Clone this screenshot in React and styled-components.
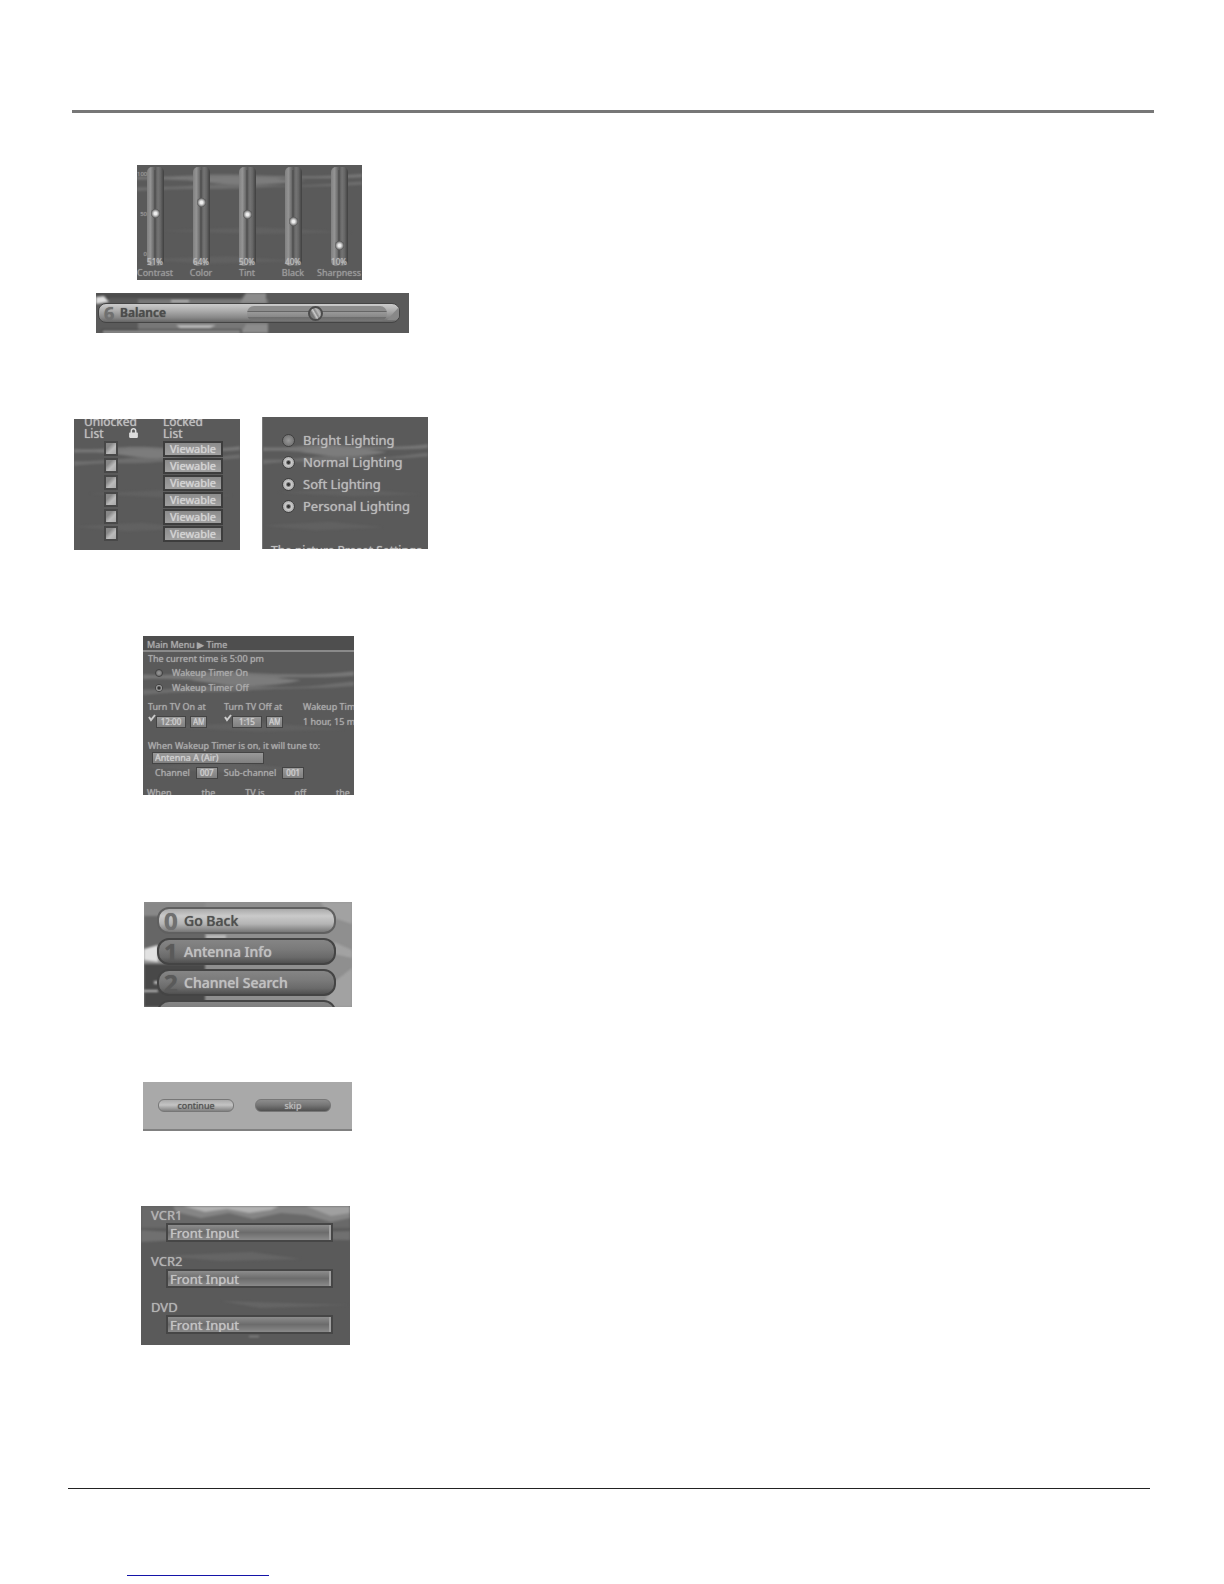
import React from 'react'
import styled, { createGlobalStyle, css } from 'styled-components'
import { FaLock } from 'react-icons/fa'

const levels = [
  { name: 'Contrast', value: 51 },
  { name: 'Color', value: 64 },
  { name: 'Tint', value: 50 },
  { name: 'Black', value: 40 },
  { name: 'Sharpness', value: 10 },
]
const channels = [1, 2, 3, 4, 5, 6]
const lighting = ['Bright Lighting', 'Normal Lighting', 'Soft Lighting', 'Personal Lighting']
const menu = ['Go Back', 'Antenna Info', 'Channel Search']
const devices = ['VCR1', 'VCR2', 'DVD']

const Waves = ({ top = 20 }) => (
  <Scenery viewBox="0 0 220 140" preserveAspectRatio="none" aria-hidden="true">
    <g transform={`translate(0 ${top})`}>
      <path d="M0 8 C40 10 60 4 100 6 S180 9 220 5 V9 C180 12 150 8 120 13 S50 10 0 12Z" fill="#777" />
      <path d="M0 21 C50 22 70 15 120 18 S190 16 220 14 V18 C180 21 150 19 110 22 S50 21 0 26Z" fill="#6e6e6e" />
      <path d="M50 13 C80 6 100 8 165 13 C140 18 110 19 85 17Z" fill="#7c7c7c" />
    </g>
    <path d="M20 80 L120 76 L210 82 L120 84Z M0 115 L90 111 L160 117 L70 120Z" fill="#616161" />
  </Scenery>
)

const Mark = () => (
  <MarkIcon viewBox="0 0 8 8" aria-hidden="true">
    <path d="M1 3 L3 6 L7 1" fill="none" stroke="#ccc" strokeWidth="2" />
  </MarkIcon>
)

const App = () => {
  return (
    <Page>
      <GlobalStyle />
      <TopRule />
      <Column>
        <LevelsShot>
          <Waves top={6} />
          <Scale>
            <span>100</span>
            <span>50</span>
            <span>0</span>
          </Scale>
          {levels.map((item) => (
            <Level key={item.name}>
              <Tube>
                <VerticalRange type="range" id={item.name} defaultValue={item.value} />
                <Percent>{item.value}%</Percent>
              </Tube>
              <LevelLabel htmlFor={item.name}>{item.name}</LevelLabel>
            </Level>
          ))}
        </LevelsShot>

        <BalanceShot>
          <Scenery viewBox="0 0 313 40" preserveAspectRatio="none" aria-hidden="true">
            <path d="M0 0H150L144 5H14L10 8L0 5Z" fill="#4c4c4c" />
            <path d="M42 6H172V40H42Z" fill="#777" />
            <path d="M150 0H170V10H144Z M150 31H172V40H145Z" fill="#8c8c8c" />
            <path d="M0 4 L8 3 L13 9 L0 11Z" fill="#ddd" />
            <path d="M75 7h18v2h-18z M80 32h40l-6 3h-30z" fill="#bbb" />
            <path d="M6 44V37H145V44Z" fill="#999" stroke="#333" />
          </Scenery>
          <BalanceBar>
            <Digit>6</Digit>
            <BalanceLabel htmlFor="balance">Balance</BalanceLabel>
            <BalanceRange type="range" id="balance" defaultValue={49} />
            <Tip viewBox="0 0 12 14" aria-hidden="true">
              <path d="M0 14 L12 1 V9 Q12 14 7 14Z" fill="#888" />
            </Tip>
          </BalanceBar>
        </BalanceShot>

        <Pair>
          <ListShot>
            <Waves top={24} />
            <ListTable>
              <thead>
                <tr>
                  <th>
                    Unlocked
                    <br />
                    List <LockIcon />
                  </th>
                  <th>
                    Locked
                    <br />
                    List
                  </th>
                </tr>
              </thead>
              <tbody>
                {channels.map((n) => (
                  <tr key={n}>
                    <td>
                      <Tick type="checkbox" aria-label={`Unlocked ${n}`} />
                    </td>
                    <td>
                      <Viewable type="button">Viewable</Viewable>
                    </td>
                  </tr>
                ))}
              </tbody>
            </ListTable>
          </ListShot>
          <LightingShot>
            <Waves top={24} />
            {lighting.map((item, i) => (
              <Choice key={item}>
                <Radio type="radio" name="lighting" defaultChecked={i === 0} />
                {item}
              </Choice>
            ))}
            <Hint>The picture Preset Settings</Hint>
          </LightingShot>
        </Pair>

        <TimerShot>
          <Waves top={26} />
          <Crumbs>Main Menu ▶ Time</Crumbs>
          <TimerBody>
            <p>The current time is 5:00 pm</p>
            <SmallChoice>
              <Radio $small type="radio" name="timer" defaultChecked />
              Wakeup Timer On
            </SmallChoice>
            <SmallChoice>
              <Radio $small type="radio" name="timer" />
              Wakeup Timer Off
            </SmallChoice>
            <Times>
              <div>
                <label htmlFor="on">Turn TV On at</label>
                <TimeRow>
                  <Mark />
                  <Field id="on" $w={30} defaultValue="12:00" />
                  <Field aria-label="On half" $w={17} defaultValue="AM" />
                </TimeRow>
              </div>
              <div>
                <label htmlFor="off">Turn TV Off at</label>
                <TimeRow>
                  <Mark />
                  <Field id="off" $w={30} defaultValue="1:15" />
                  <Field aria-label="Off half" $w={17} defaultValue="AM" />
                </TimeRow>
              </div>
              <div>
                <span>Wakeup Timer</span>
                <TimeRow>1 hour, 15 min</TimeRow>
              </div>
            </Times>
            <label htmlFor="tune">When Wakeup Timer is on, it will tune to:</label>
            <TuneSelect id="tune">
              <option>Antenna A (Air)</option>
            </TuneSelect>
            <TuneRow>
              <label htmlFor="channel">Channel</label>
              <Field id="channel" $w={22} defaultValue="007" />
              <label htmlFor="sub">Sub-channel</label>
              <Field id="sub" $w={22} defaultValue="001" />
            </TuneRow>
          </TimerBody>
          <TimerHint>
            <span>When</span>
            <span>the</span>
            <span>TV is</span>
            <span>off</span>
            <span>the</span>
          </TimerHint>
        </TimerShot>

        <MenuShot>
          <Scenery viewBox="0 0 208 105" preserveAspectRatio="none" aria-hidden="true">
            <path d="M0 0H61V14H0Z" fill="#888" />
            <path d="M0 14H61V50H0Z" fill="#666" />
            <path d="M0 62H61V105H0Z" fill="#484848" />
            <path d="M0 47 L14 43 V60 L0 58Z" fill="#e2e2e2" />
            <path d="M0 88h14v2H0z M10 79h4v3h-4z M62 33h20v4H62z" fill="#bbb" />
            <path d="M176 0 H208 V22 L190 16Z M190 40 L208 48 V56 L190 52Z M190 80 L208 66 V105 H178Z" fill="#a2a2a2" />
          </Scenery>
          {menu.map((item, i) => (
            <Pill key={item} type="button" $light={i === 0}>
              <Digit $big $light={i === 0}>{i}</Digit>
              {item}
            </Pill>
          ))}
          <Pill type="button" aria-label="More" />
        </MenuShot>

        <ActionShot>
          <Action type="button" $light>
            continue
          </Action>
          <Action type="button">skip</Action>
        </ActionShot>

        <DeviceShot>
          <Scenery viewBox="0 0 209 139" preserveAspectRatio="none" aria-hidden="true">
            <path d="M0 0H209V22H0Z" fill="#696969" />
            <path d="M32 0H209V12L190 16L165 9L140 7L112 13L88 7L60 12L35 6Z" fill="#858585" />
            <path d="M42 0H138L130 4L108 7L86 3L64 6Z" fill="#b2b2b2" />
            <path d="M165 0H209V7L190 10Z" fill="#a0a0a0" />
            <path d="M0 24 L60 28 L209 25 V34 L60 33 L0 36Z" fill="#707070" />
            <path d="M20 50 L110 46 L160 53 L80 55Z M80 95 L209 99 L120 102Z" fill="#656565" />
            <path d="M108 130h10v1h-10z" fill="#999" />
          </Scenery>
          {devices.map((item) => (
            <React.Fragment key={item}>
              <DeviceLabel htmlFor={item}>{item}</DeviceLabel>
              <DeviceSelect id={item}>
                <option>Front Input</option>
              </DeviceSelect>
            </React.Fragment>
          ))}
        </DeviceShot>
      </Column>
      <BottomRule />
      <FooterLink href="#top" aria-label="Back to top" />
    </Page>
  )
}

export default App

const GlobalStyle = createGlobalStyle`
  * { box-sizing: border-box; }
  body { margin: 0; background: #fff; }
  p { margin: 0; }
  input, button, select { font: inherit; color: inherit; margin: 0; text-shadow: inherit; }
`

const Page = styled.main`
  padding: 110px 70px 8px 68px;
  font-family: "Noto Sans", "Open Sans", sans-serif;
  color: #bebebe;
`
const TopRule = styled.hr`
  height: 3px;
  margin: 0 0 0 4px;
  border: 0;
  background: #777;
`
const BottomRule = styled.hr`
  height: 1px;
  margin: 143px 4px 0 0;
  border: 0;
  background: #222;
`
const FooterLink = styled.a`
  display: block;
  width: 142px;
  height: 20px;
  margin: 67px 0 0 59px;
  border-bottom: 1px solid #1414a8;
`
const Column = styled.div`
  display: flex;
  flex-direction: column;
  align-items: flex-start;
  padding-top: 52px;
`

const Shot = styled.section`
  position: relative;
  z-index: 0;
  overflow: hidden;
  background: #5a5a5a;
  text-shadow: 0 0 1px;
`
const Scenery = styled.svg`
  position: absolute;
  inset: 0;
  z-index: -1;
  width: 100%;
  height: 100%;
  filter: blur(1px);
`

const LevelsShot = styled(Shot)`
  display: flex;
  width: 225px;
  height: 115px;
  margin-left: 69px;
  padding-top: 2px;
`
const Scale = styled.div`
  position: absolute;
  left: 0;
  top: 4px;
  display: flex;
  flex-direction: column;
  justify-content: space-between;
  width: 10px;
  height: 90px;
  font-size: 6px;
  line-height: 10px;
  text-align: right;
  color: #999;
`
const Level = styled.div`
  display: flex;
  flex-direction: column;
  align-items: center;
  flex: 0 0 46px;
  margin-left: -5px;
  margin-right: 5px;
`
const Tube = styled.div`
  display: flex;
  flex-direction: column;
  align-items: center;
  width: 17px;
  height: 102px;
  padding-top: 3px;
  border-radius: 5px;
  background: linear-gradient(90deg, #808080, #949494 20%, #696969 40%, #5c5c5c 50%, #747474 65%, #666 80%, #3f3f3f);
`
const VerticalRange = styled.input`
  appearance: none;
  writing-mode: vertical-lr;
  direction: rtl;
  width: 9px;
  height: 88px;
  background: linear-gradient(90deg, transparent 3px, #555 3px, #555 5px, transparent 5px);
  &::-webkit-slider-thumb {
    appearance: none;
    width: 9px;
    height: 9px;
    border-radius: 50%;
    background: radial-gradient(circle at 50% 50%, #eee 20%, #aaa 45%, #444 75%);
  }
`
const Percent = styled.span`
  font-size: 8px;
  line-height: 8px;
  color: #bbb;
`
const LevelLabel = styled.label`
  font-size: 9px;
  line-height: 14px;
  color: #9a9a9a;
`

const BalanceShot = styled(Shot)`
  width: 313px;
  height: 40px;
  margin: 13px 0 0 28px;
  padding: 10px 9px 0 2px;
`
const BalanceBar = styled.div`
  display: flex;
  align-items: center;
  height: 20px;
  padding-left: 5px;
  border: 1px solid #444;
  border-radius: 8px;
  background: linear-gradient(#ccc, #aaa 40%, #888 75%, #666);
`
const Digit = styled.span`
  width: ${({ $big }) => ($big ? '20px' : '16px')};
  font-size: ${({ $big }) => ($big ? '24px' : '18px')};
  line-height: 18px;
  font-weight: 700;
  text-align: left;
  color: ${({ $big, $light }) => ($big && !$light ? '#5a5a5a' : '#707070')};
`
const BalanceLabel = styled.label`
  flex: 1;
  font-size: 12px;
  line-height: 18px;
  font-weight: 600;
  color: #4c4c4c;
`
const BalanceRange = styled.input`
  appearance: none;
  width: 140px;
  height: 15px;
  border-radius: 7px;
  background: linear-gradient(#8c8c8c 5px, #666 5px, #666 6px, #999 6px, #888 11px, #6c6c6c 11px, #777);
  &::-webkit-slider-thumb {
    appearance: none;
    width: 15px;
    height: 15px;
    border: 2px solid #4c4c4c;
    border-radius: 50%;
    background: linear-gradient(60deg, #777 30%, #ccc 45%, #888 55%, #bbb 70%, #777);
  }
`
const Tip = styled.svg`
  width: 12px;
  height: 14px;
`

const Pair = styled.div`
  display: flex;
  align-items: flex-start;
  gap: 22px;
  margin: 84px 0 0 6px;
`
const ListShot = styled(Shot)`
  width: 166px;
  height: 131px;
  margin-top: 2px;
`
const ListTable = styled.table`
  width: 150px;
  margin: -3px 0 0 10px;
  border-collapse: collapse;
  font-size: 12px;
  line-height: 12px;
  th {
    padding: 0;
    font-weight: 400;
    text-align: left;
  }
  td {
    height: 17px;
    padding: 0;
    line-height: 0;
  }
  td:first-child {
    padding-left: 20px;
  }
  th:last-child, td:last-child {
    width: 71px;
  }
`
const LockIcon = styled(FaLock)`
  width: 9px;
  height: 10px;
  margin-left: 22px;
  color: #ddd;
`
const Tick = styled.input`
  appearance: none;
  width: 14px;
  height: 15px;
  border: 2px solid #484848;
  background: linear-gradient(135deg, #888 30%, #bbb 60%, #aaa);
`
const Viewable = styled.button`
  width: 60px;
  height: 16px;
  padding: 0;
  border: 2px solid #3d3d3d;
  background: linear-gradient(#8c8c8c, #a0a0a0);
  font-size: 11px;
  line-height: 10px;
  color: #d4d4d4;
`
const LightingShot = styled(Shot)`
  width: 166px;
  height: 132px;
  padding: 12px 0 0 19px;
  border-left: 1px solid #777;
`
const Choice = styled.label`
  display: flex;
  align-items: center;
  gap: 8px;
  height: 22px;
  font-size: 13px;
  color: #bababa;
`
const Radio = styled.input`
  appearance: none;
  width: 13px;
  height: 13px;
  border: 1px solid #404040;
  border-radius: 50%;
  background: radial-gradient(circle, #333 1px, #ccc 3px, #888);
  &:checked {
    background: radial-gradient(circle, #999, #666);
  }
  ${({ $small }) => $small && css`
    width: 8px;
    height: 8px;
  `}
`
const Hint = styled.p`
  margin: 26px 0 0 -11px;
  font-size: 12px;
  line-height: 16px;
  white-space: nowrap;
`

const TimerShot = styled(Shot)`
  width: 211px;
  height: 159px;
  margin: 86px 0 0 75px;
  font-size: 9px;
  line-height: 12px;
  color: #aaa;
  white-space: nowrap;
`
const Crumbs = styled.div`
  height: 16px;
  padding: 3px 4px 0;
  border-bottom: 2px solid #8a8a8a;
  line-height: 11px;
  background: #4e4e4e;
`
const TimerBody = styled.div`
  padding: 1px 0 0 5px;
`
const SmallChoice = styled.label`
  display: flex;
  align-items: center;
  gap: 9px;
  height: 15px;
  padding-left: 7px;
`
const Times = styled.div`
  display: grid;
  grid-template-columns: 76px 79px 1fr;
  margin: 6px 0 10px;
`
const TimeRow = styled.div`
  display: flex;
  align-items: center;
  gap: 4px;
  height: 17px;
`
const MarkIcon = styled.svg`
  width: 8px;
  height: 8px;
  margin: -8px -4px 0 0;
`
const boxLook = css`
  appearance: none;
  padding: 0 2px;
  border: 1px solid #444;
  border-radius: 0;
  background: linear-gradient(#999, #808080);
  color: #d0d0d0;
`
const Field = styled.input`
  ${boxLook}
  width: ${({ $w }) => $w}px;
  height: 12px;
  font-size: 8px;
  text-align: center;
`
const TuneSelect = styled.select`
  ${boxLook}
  display: block;
  width: 112px;
  height: 12px;
  margin-left: 4px;
  font-size: 9px;
  line-height: 10px;
`
const TuneRow = styled.div`
  display: flex;
  align-items: center;
  gap: 6px;
  margin: 3px 0 0 7px;
`
const TimerHint = styled.p`
  display: flex;
  justify-content: space-between;
  margin: 8px 4px 0;
`

const MenuShot = styled(Shot)`
  display: flex;
  flex-direction: column;
  gap: 4px;
  width: 208px;
  height: 105px;
  margin: 107px 0 0 76px;
  padding: 5px 16px 0 13px;
  background: #8f8f8f;
`
const Pill = styled.button`
  display: flex;
  align-items: center;
  flex: 0 0 27px;
  padding: 0 5px;
  border: 2px solid ${({ $light }) => ($light ? '#606060' : '#444')};
  border-radius: 12px;
  background: ${({ $light }) => $light
    ? 'linear-gradient(#aaa, #cacaca 30%, #b4b4b4 65%, #777)'
    : 'linear-gradient(#858585, #7a7a7a 40%, #6a6a6a 75%, #505050)'};
  font-size: 14px;
  font-weight: 500;
  color: ${({ $light }) => ($light ? '#505050' : '#c0c0c0')};
`

const ActionShot = styled(Shot)`
  display: flex;
  gap: 21px;
  width: 209px;
  height: 49px;
  margin: 75px 0 0 75px;
  padding: 17px 15px 0;
  border-bottom: 2px solid #808080;
  background: #a9a9a9;
`
const Action = styled.button`
  width: 76px;
  height: 13px;
  padding: 0;
  border: 1px solid #777;
  border-radius: 6px;
  background: ${({ $light }) => $light
    ? 'linear-gradient(#aaa, #c4c4c4 45%, #808080)'
    : 'linear-gradient(#8c8c8c, #777 45%, #505050)'};
  font-size: 9px;
  line-height: 10px;
  color: ${({ $light }) => ($light ? '#555' : '#bbb')};
`

const DeviceShot = styled(Shot)`
  display: flex;
  flex-direction: column;
  width: 209px;
  height: 139px;
  margin: 75px 0 0 73px;
  padding-left: 10px;
`
const DeviceLabel = styled.label`
  height: 17px;
  font-size: 13px;
  line-height: 18px;
  color: #b4b4b4;
`
const DeviceSelect = styled.select`
  appearance: none;
  width: 167px;
  height: 19px;
  margin: 0 0 10px 15px;
  padding: 0 2px;
  border: 2px solid #464646;
  border-radius: 0;
  background: linear-gradient(#8c8c8c, #6c6c6c 50%, #8a8a8a);
  box-shadow: inset -2px 0 #a0a0a0;
  font-size: 13px;
  line-height: 14px;
  color: #c4c4c4;
`
